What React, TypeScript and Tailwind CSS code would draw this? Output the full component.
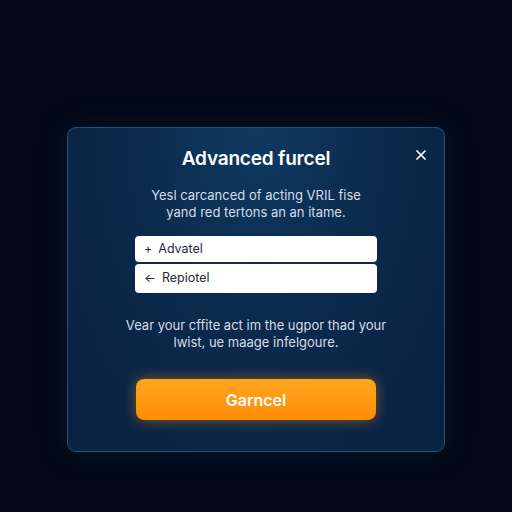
import { X } from 'lucide-react';

export default function App() {
  return (
    <div
      className="w-[512px] h-[512px] bg-[#030917] flex justify-center pt-[127px]"
      style={{ fontFamily: 'Inter, "Noto Sans", sans-serif' }}
    >
      {/* dialog */}
      <div className="relative w-[378px] h-[325px] rounded-[9px] border border-[#24507a] bg-[radial-gradient(ellipse_at_50%_0%,#0f3a62_0%,#0b2a4c_45%,#0a2140_100%)] shadow-[0_0_30px_rgba(20,60,110,0.25)] flex flex-col items-center">
        <button className="absolute top-[19px] right-[15px] text-white">
          <X className="w-[16px] h-[16px]" strokeWidth={2.6} />
        </button>

        <h2 className="mt-[19px] text-[19px] leading-[24px] font-semibold text-white tracking-[-0.2px]">
          Advanced furcel
        </h2>

        <p className="mt-[16px] text-[13px] leading-[17px] text-[#d6dde8] text-center">
          Yesl carcanced of acting VRIL fise
          <br />
          yand red tertons an an itame.
        </p>

        {/* options */}
        <div className="mt-[15px] w-[242px] flex flex-col gap-[2px]">
          <div className="h-[26px] rounded-[4px] bg-white flex items-center px-[9px] gap-[6px] text-[12.5px] text-[#1f2a3a]">
            <span>+</span>
            <span>Advatel</span>
          </div>
          <div className="h-[29px] rounded-[4px] bg-white flex items-center px-[9px] gap-[6px] text-[12.5px] text-[#1f2a3a]">
            <span>←</span>
            <span>Repiotel</span>
          </div>
        </div>

        <p className="mt-[24px] text-[13px] leading-[17px] text-[#d6dde8] text-center">
          Vear your cffite act im the ugpor thad your
          <br />
          lwist, ue maage infelgoure.
        </p>

        <button className="mt-[28px] w-[240px] h-[41px] rounded-[8px] bg-gradient-to-b from-[#ffa51c] to-[#ff8c05] shadow-[0_0_14px_rgba(255,150,20,0.45)] text-white text-[16px] font-semibold">
          Garncel
        </button>
      </div>
    </div>
  );
}
